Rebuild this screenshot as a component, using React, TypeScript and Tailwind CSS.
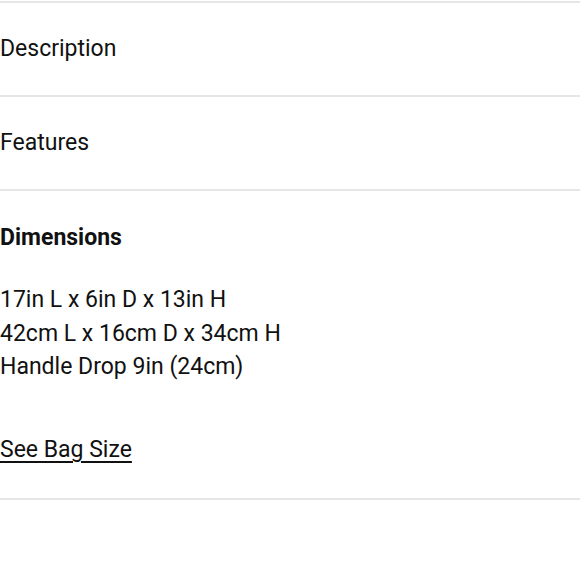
export default function App() {
  return (
    <div className="min-h-[580px] bg-white pt-px font-['Roboto',sans-serif] text-[23px] leading-[33px] text-[#111]">
      <div className="flex h-[94px] items-center border-t-2 border-[#e6e6e6]">
        <span className="-mt-px">Description</span>
      </div>
      <div className="flex h-[94px] items-center border-t-2 border-[#e6e6e6]">
        <span className="-mt-px">Features</span>
      </div>
      <div className="border-t-2 border-[#e6e6e6] pt-[30px] pb-[32px]">
        <h3 className="font-bold">Dimensions</h3>
        <div className="mt-[29px] leading-[33.5px]">
          <p>17in L x 6in D x 13in H</p>
          <p>42cm L x 16cm D x 34cm H</p>
          <p>Handle Drop 9in (24cm)</p>
        </div>
        <a href="#" className="mt-[49.5px] block underline underline-offset-[4px]">
          See Bag Size
        </a>
      </div>
      <div className="border-t-2 border-[#e6e6e6]" />
    </div>
  );
}
